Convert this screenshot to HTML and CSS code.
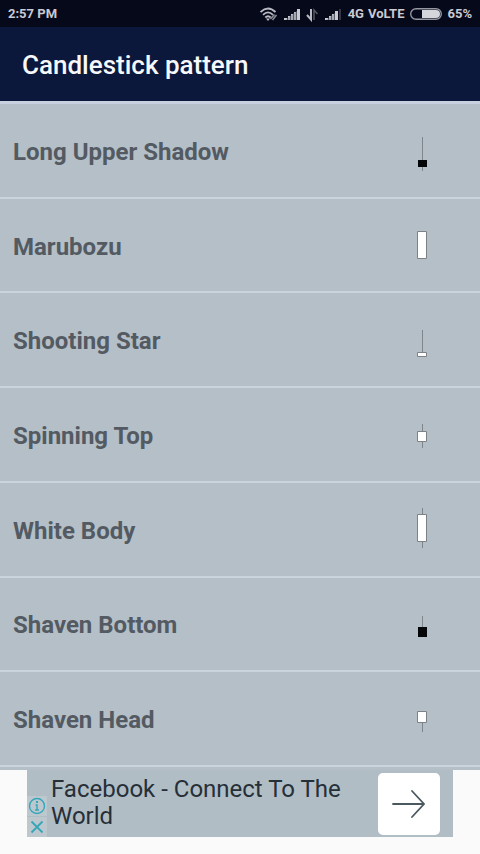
FILE: index.html
```html
<!DOCTYPE html>
<html lang="en">
<head>
<meta charset="utf-8">
<meta name="viewport" content="width=device-width, initial-scale=1">
<title>Candlestick pattern</title>
<link rel="stylesheet" href="styles.css">
</head>
<body>
<div class="status">
  <span class="clock">2:57 PM</span>
  <svg class="signals" width="84" height="16" viewBox="0 0 84 16" aria-hidden="true">
    <g fill="none" stroke="#b9bac4" stroke-width="1.800">
      <path d="M.5 6Q8 -1 15.500 6"/>
      <path d="M3 8.800Q8 4 13 8.800"/>
      <path d="M5.300 11.500Q8 9 10.700 11.500"/>
    </g>
    <path d="M6 12.500h4L8 15z" fill="#b9bac4"/>
    <path d="M12.500 14l4-5M10.500 13l4-4.500" stroke="#8a8c96" stroke-width="1.500"/>
    <path d="M24 12h3v2h-3zM28 10h2v4h-2zM31 8h2v6h-2zM34 6h2v8h-2zM37 3h3v11h-3z" fill="#c9cad2"/>
    <path d="M25 14l12-9v9z" fill="#8d8f99" opacity=".6"/>
    <path d="M51 3v10.500l-4-4.500" stroke="#b9bac4" stroke-width="2" fill="none"/>
    <path d="M54 14V4l3.500 4" stroke="#55585f" stroke-width="1.500" fill="none"/>
    <path d="M65 12h3v2h-3zM69 10h2v4h-2zM72 8h2v6h-2zM75 5h3v9h-3z" fill="#c9cad2"/>
    <path d="M66 14l9-7v7z" fill="#8d8f99" opacity=".6"/>
    <path d="M79 3h2v11h-2z" fill="#343743"/>
  </svg>
  <span>4G</span>
  <span>VoLTE</span>
  <svg class="battery" width="32" height="12" viewBox="0 0 32 12" aria-hidden="true">
    <rect x=".7" y=".7" width="30.600" height="10.600" rx="5.300" fill="none" stroke="#9496a0" stroke-width="1.400"/>
    <path d="M12 2h14a4 4 0 0 1 0 8H12z" fill="#d5d6dc"/>
  </svg>
  <span>65%</span>
</div>
<header class="bar"><h1>Candlestick pattern</h1></header>
<ul class="list">
  <li><span>Long Upper Shadow</span>
    <svg class="candle" viewBox="0 0 48 48" aria-hidden="true"><path class="wick" d="M24.500 11v34"/><path class="black" d="M20 34h9v7h-9z"/></svg></li>
  <li><span>Marubozu</span>
    <svg class="candle" viewBox="0 0 48 48" aria-hidden="true"><path class="white" d="M19.500 10.500h9v27h-9z"/></svg></li>
  <li><span>Shooting Star</span>
    <svg class="candle" viewBox="0 0 48 48" aria-hidden="true"><path class="wick" d="M24.500 14v23"/><path class="white" d="M19.500 36.500h9v4h-9z"/></svg></li>
  <li><span>Spinning Top</span>
    <svg class="candle" viewBox="0 0 48 48" aria-hidden="true"><path class="wick" d="M24.500 13v24"/><path class="white" d="M19.500 20.500h9v10h-9z"/></svg></li>
  <li><span>White Body</span>
    <svg class="candle" viewBox="0 0 48 48" aria-hidden="true"><path class="wick" d="M24.500 3v40"/><path class="white" d="M19.500 9.500h9v27h-9z"/></svg></li>
  <li><span>Shaven Bottom</span>
    <svg class="candle" viewBox="0 0 48 48" aria-hidden="true"><path class="wick" d="M24.500 16v11"/><path class="black" d="M20 27h9v10h-9z"/></svg></li>
  <li><span>Shaven Head</span>
    <svg class="candle" viewBox="0 0 48 48" aria-hidden="true"><path class="wick" d="M24.500 27v10"/><path class="white" d="M19.500 16.500h9v11h-9z"/></svg></li>
</ul>
<footer class="footer">
  <div class="ad">
    <div class="adchoices">
      <button type="button" aria-label="Ad information">
        <svg width="18" height="18" viewBox="0 0 18 18" fill="none" stroke="#35a6b9" stroke-width="1.400"><circle cx="9" cy="9" r="7.500"/><path d="M9 4v2" stroke-width="2"/><path d="M7.500 8H9V13M7 13h4"/></svg>
      </button>
      <button type="button" aria-label="Close ad">
        <svg width="18" height="18" viewBox="0 0 18 18" fill="none" stroke="#35a6b9" stroke-width="1.800"><path d="M3.500 3.500l11 11M14.500 3.500l-11 11"/></svg>
      </button>
    </div>
    <a class="adtext" href="#">Facebook - Connect To The World</a>
    <button class="go" type="button" aria-label="Open">
      <svg width="36" height="32" viewBox="0 0 36 32" fill="none" stroke="#4a595e" stroke-width="1.800" stroke-linecap="round"><path d="M2 16h31M21 3l12 13-12 13"/></svg>
    </button>
  </div>
</footer>
</body>
</html>
```
FILE: styles.css
```css
* { box-sizing: border-box; }

body {
  margin: 0;
  min-height: 100vh;
  display: flex;
  flex-direction: column;
  background: #fafafa;
  font-family: Roboto, "Liberation Sans", sans-serif;
}

.status {
  display: flex;
  align-items: center;
  gap: 4px;
  height: 27px;
  padding: 0 8px;
  background: #060919;
  color: #c9cad2;
  font-size: 13px;
  font-weight: 700;
}

.clock { margin-right: auto; }
.battery { margin: 0 1px 0 2px; }

.bar {
  display: flex;
  align-items: center;
  height: 74px;
  padding: 2px 22px 0;
  background: #0b173b;
}

h1 {
  margin: 0;
  color: #f7f8fc;
  font-size: 26px;
  font-weight: 500;
}

.list {
  flex: 1;
  display: flex;
  flex-direction: column;
  margin: 0;
  padding: 0 0 3px;
  border-top: 3px solid #c8cfde;
  background: #b4bfc8;
  list-style: none;
}

.list li {
  flex: 1;
  display: flex;
  align-items: center;
  justify-content: space-between;
  padding: 0 34px 0 13px;
  border-bottom: 2px solid #c9d4dc;
  color: #535a62;
  font-size: 24px;
  font-weight: 700;
}

.list span { padding-top: 3px; }

.candle { width: 48px; height: 48px; }
.wick { stroke: #7e868c; stroke-width: 1; }
.white { fill: #fff; stroke: #7c8286; stroke-width: 1; }
.black { fill: #050608; }

.footer {
  height: 84px;
  padding: 0 27px;
}

.ad {
  display: flex;
  height: 67px;
  background: #b0bdc5;
}

button {
  display: flex;
  align-items: center;
  justify-content: center;
  padding: 0;
  border: 0;
  cursor: pointer;
}

.adchoices {
  display: flex;
  flex-direction: column;
  justify-content: flex-end;
  gap: 1px;
}

.adchoices button {
  width: 20px;
  height: 20px;
  background: #bdc8ce;
}

.adtext {
  flex: 1;
  padding: 6px 0 0 4px;
  color: #262f38;
  font-size: 24px;
  line-height: 27px;
  text-decoration: none;
}

.go {
  width: 62px;
  height: 62px;
  margin: 3px 13px 0 0;
  border-radius: 5px;
  background: #fff;
}
```
